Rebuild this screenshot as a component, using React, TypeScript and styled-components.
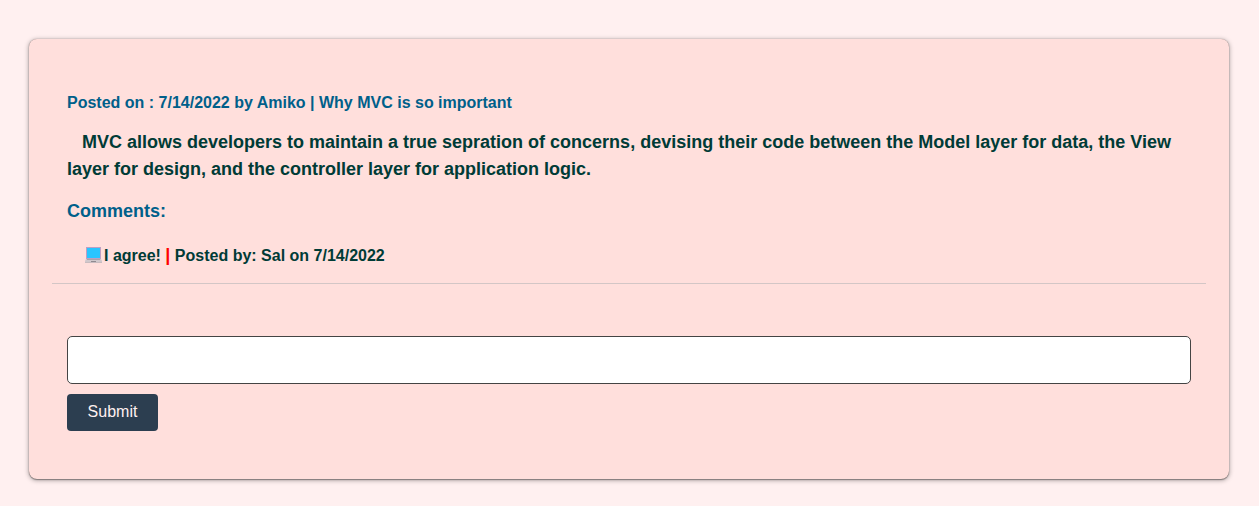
import React from "react";
import styled, { createGlobalStyle } from "styled-components";

const GlobalStyle = createGlobalStyle`
  *, *::before, *::after { box-sizing: border-box; }
  body {
    margin: 0;
    background: #fff0f0;
    color: #003b36;
    font-family: Arial, "Liberation Sans", sans-serif;
    font-size: 16px;
    line-height: 24px;
  }
`;

const Page = styled.main`
  padding: 39px 30px 27px 29px;
`;

const Card = styled.article`
  padding: 37px 23px 32px;
  border-radius: 8px;
  background: #ffdfdc;
  box-shadow: 0 1px 1px rgba(0, 0, 0, 0.3), 0 0 1px rgba(0, 0, 0, 0.4),
    0 1px 5px rgba(0, 0, 0, 0.4);
`;

const Post = styled.section`
  padding: 15px 15px 16px;
  border-bottom: 1px solid #d3c6c6;
`;

const PostHeading = styled.h1`
  margin: 0 0 14px;
  color: #005f8a;
  font-size: 16px;
  line-height: 24px;
`;

const PostBody = styled.p`
  margin: 0 0 14px;
  font-size: 18px;
  font-weight: bold;
  line-height: 27px;
  text-indent: 15px;
`;

const CommentsHeading = styled.h2`
  margin: 0 0 18px;
  color: #005f8a;
  font-size: 18px;
  line-height: 28px;
`;

const CommentList = styled.ul`
  margin: 0;
  padding: 0 0 0 18px;
  list-style: none;
`;

const Comment = styled.li`
  display: flex;
  align-items: center;
  height: 24px;
  font-weight: bold;
`;

const LaptopIcon = styled.svg`
  width: 17px;
  height: 18px;
  margin-right: 2px;
`;

const Divider = styled.span`
  color: #ff0000;
  font-size: 18px;
`;

const CommentForm = styled.form`
  display: flex;
  flex-direction: column;
  align-items: flex-start;
  gap: 10px;
  padding: 52px 15px 16px;
`;

const CommentInput = styled.input`
  width: 100%;
  height: 48px;
  padding: 0 12px;
  border: 1px solid #444;
  border-radius: 5px;
  background: #fff;
  font: inherit;
`;

const SubmitButton = styled.button`
  min-width: 91px;
  height: 37px;
  padding: 0 20px 2px;
  border: 0;
  border-radius: 4px;
  background: #2c3e50;
  color: #fff0f0;
  font: inherit;
`;

function Laptop() {
  return (
    <LaptopIcon viewBox="0 0 17 18" aria-hidden="true">
      <path d="M1 1h15v12H1z" fill="#bd9fc4" />
      <path d="M2 2h13v10H2z" fill="#29c5ff" />
      <path d="M1 13h15l1 2v2H0v-2z" fill="#d0c8cc" />
      <path d="M2 13.5h13" stroke="#aaa3a8" />
      <path d="M0 16.5h17" stroke="#c8bcc0" />
      <path d="M6 15.5h5" stroke="#8f8a90" />
    </LaptopIcon>
  );
}

export default function App() {
  return (
    <>
      <GlobalStyle />
      <Page>
        <Card>
          <Post>
            <PostHeading>Posted on : 7/14/2022 by Amiko | Why MVC is so important</PostHeading>
            <PostBody>
              MVC allows developers to maintain a true sepration of concerns, devising their code
              between the Model layer for data, the View layer for design, and the controller layer
              for application logic.
            </PostBody>
            <CommentsHeading>Comments:</CommentsHeading>
            <CommentList>
              <Comment>
                <Laptop />
                <span>
                  I agree! <Divider>|</Divider> Posted by: Sal on 7/14/2022
                </span>
              </Comment>
            </CommentList>
          </Post>
          <CommentForm onSubmit={(event) => event.preventDefault()}>
            <CommentInput type="text" aria-label="Add a comment" />
            <SubmitButton type="submit">Submit</SubmitButton>
          </CommentForm>
        </Card>
      </Page>
    </>
  );
}
